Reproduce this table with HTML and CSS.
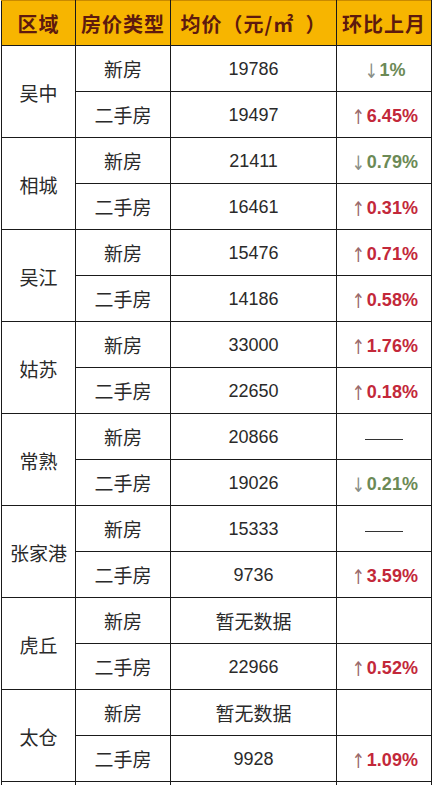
FILE: index.html
```html
<!DOCTYPE html>
<html lang="zh">
<head>
<meta charset="utf-8">
<link rel="stylesheet" href="styles.css">
</head>
<body>
<div class="wrap">
<table class="grid">
  <colgroup>
    <col class="c1"><col class="c2"><col class="c3"><col class="c4">
  </colgroup>
  <thead>
    <tr class="head">
      <th>区域</th><th>房价类型</th><th>均价（元/㎡&nbsp;&nbsp;）</th><th>环比上月</th>
    </tr>
  </thead>
  <tbody>
    <tr><td rowspan="2" class="area">吴中</td><td>新房</td><td class="num">19786</td><td class="pct down"><span class="arr">↓</span>1%</td></tr>
    <tr><td>二手房</td><td class="num">19497</td><td class="pct up"><span class="arr">↑</span>6.45%</td></tr>
    <tr><td rowspan="2" class="area">相城</td><td>新房</td><td class="num">21411</td><td class="pct down"><span class="arr">↓</span>0.79%</td></tr>
    <tr><td>二手房</td><td class="num">16461</td><td class="pct up"><span class="arr">↑</span>0.31%</td></tr>
    <tr><td rowspan="2" class="area">吴江</td><td>新房</td><td class="num">15476</td><td class="pct up"><span class="arr">↑</span>0.71%</td></tr>
    <tr><td>二手房</td><td class="num">14186</td><td class="pct up"><span class="arr">↑</span>0.58%</td></tr>
    <tr><td rowspan="2" class="area">姑苏</td><td>新房</td><td class="num">33000</td><td class="pct up"><span class="arr">↑</span>1.76%</td></tr>
    <tr><td>二手房</td><td class="num">22650</td><td class="pct up"><span class="arr">↑</span>0.18%</td></tr>
    <tr><td rowspan="2" class="area">常熟</td><td>新房</td><td class="num">20866</td><td class="dash"><span class="line"></span></td></tr>
    <tr><td>二手房</td><td class="num">19026</td><td class="pct down"><span class="arr">↓</span>0.21%</td></tr>
    <tr><td rowspan="2" class="area">张家港</td><td>新房</td><td class="num">15333</td><td class="dash"><span class="line"></span></td></tr>
    <tr><td>二手房</td><td class="num">9736</td><td class="pct up"><span class="arr">↑</span>3.59%</td></tr>
    <tr><td rowspan="2" class="area">虎丘</td><td>新房</td><td class="cn">暂无数据</td><td></td></tr>
    <tr><td>二手房</td><td class="num">22966</td><td class="pct up"><span class="arr">↑</span>0.52%</td></tr>
    <tr><td rowspan="2" class="area">太仓</td><td>新房</td><td class="cn">暂无数据</td><td></td></tr>
    <tr><td>二手房</td><td class="num">9928</td><td class="pct up"><span class="arr">↑</span>1.09%</td></tr>
    <tr class="tail"><td></td><td></td><td></td><td></td></tr>
  </tbody>
</table>
</div>
</body>
</html>
```

FILE: styles.css
```css
html, body {
  margin: 0;
  padding: 0;
  background: #ffffff;
}
.wrap {
  width: 432px;
  height: 785px;
  overflow: hidden;
  padding-left: 1px;
  box-sizing: border-box;
}
.grid {
  border-collapse: collapse;
  table-layout: fixed;
  width: 430px;
  font-family: "Noto Sans CJK SC", "Liberation Sans", sans-serif;
  color: #2a2a2a;
}
.c1 { width: 74px; }
.c2 { width: 95px; }
.c3 { width: 166px; }
.c4 { width: 95px; }
.grid th, .grid td {
  border: 1px solid #1a1a1a;
  text-align: center;
  vertical-align: middle;
  padding: 0;
}
.head th {
  height: 44px;
  background: #f7b500;
  color: #5e1a0e;
  font-size: 20px;
  font-weight: 700;
  letter-spacing: 1px;
  border-top-color: #c98a00;
}
.grid tbody tr { height: 46px; }
.grid td {
  height: 45px;
  font-size: 19px;
  font-weight: 400;
  line-height: 1;
}
.grid td.area { font-size: 19px; padding-top: 2px; }
.grid td.num {
  font-family: "Liberation Sans", Arial, sans-serif;
  font-size: 18px;
  color: #2a2a2a;
}
.grid td.cn { font-size: 19px; }
.grid td.pct {
  font-family: "Liberation Sans", Arial, sans-serif;
  font-size: 18px;
  font-weight: 700;
}
.pct .arr {
  font-family: "DejaVu Sans", sans-serif;
  font-weight: 400;
  font-size: 20px;
  display: inline-block;
  transform: scaleX(0.8) translateY(2px);
  margin-right: 0;
}
.pct.up { color: #c3283a; }
.pct.up .arr { color: #9a6a6a; }
.pct.down { color: #6c8a56; }
.pct.down .arr { color: #8a8f88; }
.dash .line {
  display: inline-block;
  width: 38px;
  height: 1px;
  background: #333;
  vertical-align: middle;
}
.tail td { height: 10px; }
```
